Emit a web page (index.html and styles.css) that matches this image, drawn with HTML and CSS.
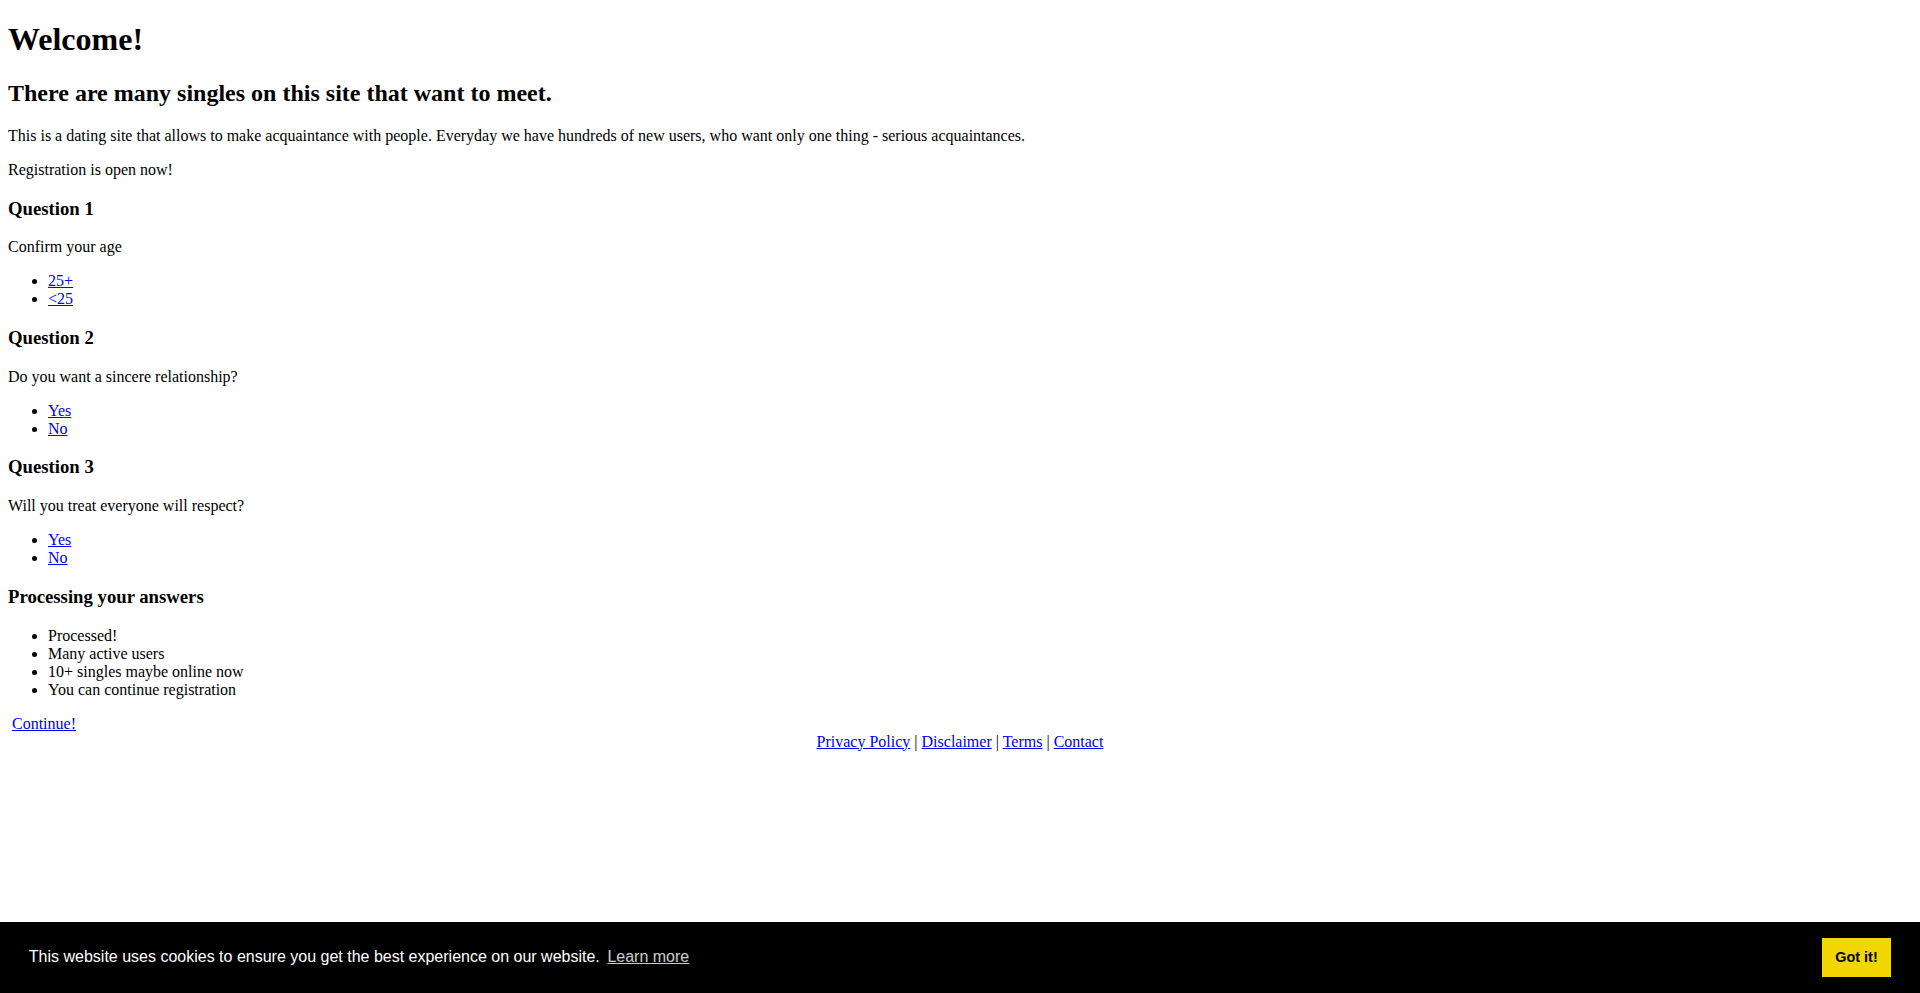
FILE: index.html
```html
<!DOCTYPE html>
<html lang="en">
<head>
<meta charset="utf-8">
<title>Welcome!</title>
<link rel="stylesheet" href="styles.css">
</head>
<body>
<h1>Welcome!</h1>
<h2>There are many singles on this site that want to meet.</h2>
<p>This is a dating site that allows to make acquaintance with people. Everyday we have hundreds of new users, who want only one thing - serious acquaintances.</p>
<p>Registration is open now!</p>

<h3>Question 1</h3>
<p>Confirm your age</p>
<ul>
  <li><a href="#">25+</a></li>
  <li><a href="#">&lt;25</a></li>
</ul>

<h3>Question 2</h3>
<p>Do you want a sincere relationship?</p>
<ul>
  <li><a href="#">Yes</a></li>
  <li><a href="#">No</a></li>
</ul>

<h3>Question 3</h3>
<p>Will you treat everyone will respect?</p>
<ul>
  <li><a href="#">Yes</a></li>
  <li><a href="#">No</a></li>
</ul>

<h3>Processing your answers</h3>
<ul>
  <li>Processed!</li>
  <li>Many active users</li>
  <li>10+ singles maybe online now</li>
  <li>You can continue registration</li>
</ul>

<div class="continue"><a href="#">Continue!</a></div>
<div class="footer"><a href="#">Privacy Policy</a> | <a href="#">Disclaimer</a> | <a href="#">Terms</a> | <a href="#">Contact</a></div>

<div class="cc-window">
  <span class="cc-message">This website uses cookies to ensure you get the best experience on our website. <a class="cc-link" href="#">Learn more</a></span>
  <div class="cc-compliance"><a class="cc-btn" href="#">Got it!</a></div>
</div>
</body>
</html>
```

FILE: styles.css
```css
body {
  margin: 0 8px 8px;
  font-family: "Liberation Serif", "Times New Roman", serif;
  font-size: 16px;
  color: #000;
  background: #fff;
}

a {
  color: #0000ee;
}

.continue {
  padding-left: 4px;
}

.footer {
  text-align: center;
}

.cc-window {
  position: fixed;
  left: 0;
  right: 0;
  bottom: 0;
  display: flex;
  flex-direction: row;
  align-items: center;
  box-sizing: border-box;
  padding: 1em 1.8em;
  font-family: "Liberation Sans", Arial, sans-serif;
  font-size: 16px;
  line-height: 1.5em;
  background: #000;
  color: #fff;
  z-index: 10;
}

.cc-message {
  flex: 1 1 auto;
  margin-right: 1em;
}

.cc-link {
  display: inline-block;
  padding: 0.2em;
  color: inherit;
  opacity: 0.8;
  text-decoration: underline;
}

.cc-compliance {
  display: flex;
  align-items: center;
}

.cc-btn {
  display: block;
  padding: 0.4em 0.8em;
  font-size: 0.9em;
  font-weight: 700;
  border: 2px solid transparent;
  text-align: center;
  white-space: nowrap;
  text-decoration: none;
  background: #f1d600;
  color: #000;
}
```
